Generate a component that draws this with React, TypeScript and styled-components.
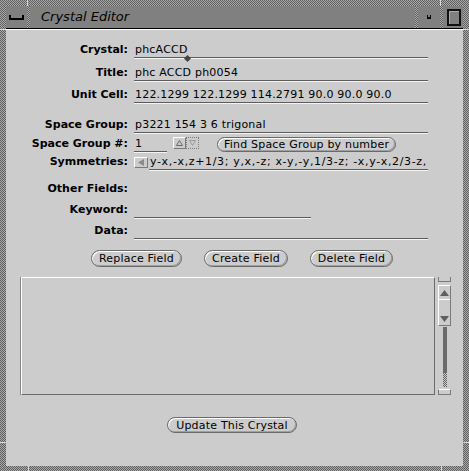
import React from "react";
import styled, { createGlobalStyle } from "styled-components";

const GlobalStyle = createGlobalStyle`
  html, body {
    margin: 0;
    padding: 0;
    background: #cccccc;
  }
  body {
    font-family: "DejaVu Sans", sans-serif;
  }
`;

const dither = `repeating-conic-gradient(#a9a9a9 0% 25%, #5f5f5f 0% 50%) 0 0 / 2px 2px`;

const Window = styled.div`
  position: relative;
  width: 469px;
  height: 471px;
  box-sizing: border-box;
  padding: 6px 6px 5px 6px;
  background: ${dither};
  display: flex;
  flex-direction: column;
`;

const Tick = styled.span<{ $v?: boolean }>`
  position: absolute;
  background: #d8d8d8;
  width: ${(p) => (p.$v ? "1px" : "6px")};
  height: ${(p) => (p.$v ? "6px" : "1px")};
`;

const TitleBar = styled.div`
  height: 22px;
  display: flex;
  background: #808080;
  border-bottom: 1px solid #000;
`;

const TitleSep = styled.div`
  width: 3px;
  background: ${dither};
`;

const TitleBox = styled.div<{ $w: number }>`
  width: ${(p) => p.$w}px;
  display: flex;
  align-items: center;
  justify-content: center;
`;

const TitleText = styled.div`
  flex: 1;
  padding-left: 11px;
  font: oblique 13px/22px "DejaVu Sans", sans-serif;
  color: #000;
`;

const ZoomBox = styled.div`
  width: 10px;
  height: 13px;
  border: 2px solid #111;
  box-shadow: inset 1px 1px 0 #a8a8a8;
  margin-left: 1px;
`;

const Panel = styled.div`
  flex: 1;
  background: #cccccc;
  border-top: 1px solid #fff;
  padding-top: 12px;
  display: flex;
  flex-direction: column;
`;

const Row = styled.div<{ $mt?: number }>`
  display: grid;
  grid-template-columns: 122px 294px;
  column-gap: 6px;
  margin-top: ${(p) => p.$mt ?? 0}px;
  height: 16px;
  align-items: start;
`;

const Label = styled.div`
  font: bold 11px/15px "DejaVu Sans", sans-serif;
  text-align: right;
  color: #000;
  white-space: nowrap;
`;

const Field = styled.div<{ $w?: number; $ls?: number; $open?: boolean }>`
  position: relative;
  width: ${(p) => (p.$w ? `${p.$w}px` : "auto")};
  flex: ${(p) => (p.$w ? "none" : "1")};
  height: 15px;
  padding-left: 1px;
  font: 11px/15px "DejaVu Sans", sans-serif;
  letter-spacing: ${(p) => p.$ls ?? 0.2}px;
  color: #000;
  white-space: nowrap;
  overflow: ${(p) => (p.$open ? "visible" : "hidden")};
  border-bottom: 1px solid #5c5c5c;
  box-shadow: 0 1px 0 #f4f4f4;
`;

const Caret = styled.span`
  position: relative;
  display: inline-block;
  width: 0;
  height: 0;

  svg {
    position: absolute;
    left: -4px;
    top: 2px;
  }
`;

const Inline = styled.div<{ $gap?: number }>`
  display: flex;
  align-items: flex-start;
  gap: ${(p) => p.$gap ?? 0}px;
`;

const SpinBox = styled.div<{ $dim?: boolean }>`
  width: 11px;
  height: 10px;
  margin-top: 1px;
  display: flex;
  align-items: center;
  justify-content: center;
  border: 1px ${(p) => (p.$dim ? "dotted #7a7a7a" : "solid")};
  border-color: ${(p) => (p.$dim ? "#7a7a7a" : "#fff #7a7a7a #7a7a7a #fff")};
`;

const ScrollArrowBox = styled.div`
  width: 12px;
  height: 9px;
  margin-top: 3px;
  display: flex;
  align-items: center;
  justify-content: center;
  border: 1px solid;
  border-color: #fff #7a7a7a #7a7a7a #fff;
`;

const Button = styled.button<{ $h?: number; $px?: number }>`
  height: ${(p) => p.$h ?? 17}px;
  padding: 0 ${(p) => p.$px ?? 7}px;
  margin: 0;
  border: 1px solid #6a6a6a;
  border-radius: 9px;
  background: #cccccc;
  box-shadow: inset 1px 1px 0 #fff, inset -1px -1px 0 #a0a0a0;
  font: 11px/1 "DejaVu Sans", sans-serif;
  letter-spacing: 0.2px;
  color: #000;
  white-space: nowrap;
`;

const ButtonRow = styled.div<{ $mt: number; $center?: boolean }>`
  display: flex;
  margin-top: ${(p) => p.$mt}px;
  padding-left: ${(p) => (p.$center ? 0 : 85)}px;
  padding-right: ${(p) => (p.$center ? 5 : 0)}px;
  justify-content: ${(p) => (p.$center ? "center" : "flex-start")};
  gap: 22px;
`;

const ListRow = styled.div`
  display: flex;
  margin-top: 10px;
  padding-left: 15px;
  gap: 3px;
  height: 118px;
`;

const ListBox = styled.div`
  width: 412px;
  height: 116px;
  border: 1px solid;
  border-color: #fff #6a6a6a #6a6a6a #fff;
  box-shadow: -1px 0 0 #8a8a8a;
`;

const Scrollbar = styled.div`
  width: 13px;
  display: flex;
  flex-direction: column;
  align-items: center;
`;

const Cap = styled.div<{ $bottom?: boolean }>`
  width: 11px;
  height: 4px;
  border: 1px solid #7a7a7a;
  ${(p) => (p.$bottom ? "border-top-color: #fff;" : "border-top: none;")}
  margin-top: ${(p) => (p.$bottom ? 2 : 0)}px;
`;

const Elevator = styled.div`
  width: 11px;
  height: 39px;
  margin-top: 3px;
  border: 1px solid;
  border-color: #fff #7a7a7a #7a7a7a #fff;
  display: flex;
  flex-direction: column;
`;

const ElevUp = styled.div`
  height: 13px;
  border-bottom: 1px solid #fff;
  display: flex;
  align-items: center;
  justify-content: center;
`;

const ElevDown = styled.div`
  flex: 1;
  display: flex;
  align-items: flex-end;
  justify-content: center;
  padding-bottom: 3px;
`;

const Cable = styled.div`
  width: 4px;
  flex: 1;
  margin-top: 1px;
  background: #6a6a6a;
`;

const CableDither = styled.div`
  width: 4px;
  height: 14px;
  background: repeating-conic-gradient(#cfcfcf 0% 25%, #5f5f5f 0% 50%) 0 0 / 2px 2px;
`;

const upTri = (
  <svg width="9" height="6" viewBox="0 0 9 6">
    <path d="M4.5 0 L9 6 H0 Z" fill="#5f5f5f" />
  </svg>
);

const downTri = (
  <svg width="9" height="6" viewBox="0 0 9 6">
    <path d="M0 0 H9 L4.5 6 Z" fill="#5f5f5f" />
  </svg>
);

export default function App() {
  return (
    <>
      <GlobalStyle />
      <Window>
        <Tick $v style={{ left: 27, top: 0 }} />
        <Tick $v style={{ left: 440, top: 0 }} />
        <Tick $v style={{ left: 28, bottom: 0 }} />
        <Tick $v style={{ left: 441, bottom: 0 }} />
        <Tick style={{ left: 0, top: 29 }} />
        <Tick style={{ right: 0, top: 29 }} />
        <Tick style={{ left: 0, bottom: 28 }} />
        <Tick style={{ right: 0, bottom: 28 }} />
        <TitleBar>
          <TitleBox $w={21}>
            <svg width="15" height="5" viewBox="0 0 15 5">
              <path d="M1 0 V4 H14 V0" stroke="#000" strokeWidth="2" fill="none" />
            </svg>
          </TitleBox>
          <TitleSep />
          <TitleText>Crystal Editor</TitleText>
          <TitleSep />
          <TitleBox $w={22}>
            <svg width="4" height="4" viewBox="0 0 4 4">
              <path d="M0 0 H1 V2 H3 V0 H4 V4 H0 Z" fill="#000" />
            </svg>
          </TitleBox>
          <TitleSep />
          <TitleBox $w={20}>
            <ZoomBox />
          </TitleBox>
        </TitleBar>
        <Panel>
          <Row>
            <Label>Crystal:</Label>
            <Field $open>
              phcACCD
              <Caret>
                <svg width="7" height="7" viewBox="0 0 7 7">
                  <path d="M3.5 0 L7 3.5 L3.5 7 L0 3.5 Z" fill="#444" />
                </svg>
              </Caret>
            </Field>
          </Row>
          <Row $mt={7}>
            <Label>Title:</Label>
            <Field>phc ACCD ph0054</Field>
          </Row>
          <Row $mt={6}>
            <Label>Unit Cell:</Label>
            <Field>122.1299 122.1299 114.2791 90.0 90.0 90.0</Field>
          </Row>
          <Row $mt={14}>
            <Label>Space Group:</Label>
            <Field>p3221 154 3 6 trigonal</Field>
          </Row>
          <Row $mt={3}>
            <Label>Space Group #:</Label>
            <Inline>
              <Field $w={32}>1</Field>
              <Inline style={{ marginLeft: 6 }}>
                <SpinBox>
                  <svg width="7" height="6" viewBox="0 0 7 6">
                    <path d="M3.5 0.5 L6.5 5.5 H0.5 Z" stroke="#6a6a6a" fill="none" />
                  </svg>
                </SpinBox>
                <SpinBox $dim>
                  <svg width="7" height="6" viewBox="0 0 7 6">
                    <path d="M0.5 0.5 H6.5 L3.5 5.5 Z" stroke="#9a9a9a" fill="none" />
                  </svg>
                </SpinBox>
              </Inline>
              <Button $h={15} $px={6} style={{ marginLeft: 18, marginTop: 1 }}>
                Find Space Group by number
              </Button>
            </Inline>
          </Row>
          <Row $mt={2}>
            <Label>Symmetries:</Label>
            <Inline $gap={1}>
              <ScrollArrowBox>
                <svg width="6" height="7" viewBox="0 0 6 7">
                  <path d="M0 3.5 L6 0 V7 Z" fill="#8a8a8a" />
                </svg>
              </ScrollArrowBox>
              <Field $ls={0.65}>y-x,-x,z+1/3; y,x,-z; x-y,-y,1/3-z; -x,y-x,2/3-z,</Field>
            </Inline>
          </Row>
          <Row $mt={11}>
            <Label>Other Fields:</Label>
          </Row>
          <Row $mt={5}>
            <Label>Keyword:</Label>
            <Field $w={176} />
          </Row>
          <Row $mt={5}>
            <Label>Data:</Label>
            <Field />
          </Row>
          <ButtonRow $mt={11}>
            <Button>Replace Field</Button>
            <Button>Create Field</Button>
            <Button>Delete Field</Button>
          </ButtonRow>
          <ListRow>
            <ListBox />
            <Scrollbar>
              <Cap />
              <Elevator>
                <ElevUp>{upTri}</ElevUp>
                <ElevDown>{downTri}</ElevDown>
              </Elevator>
              <Cable />
              <CableDither />
              <Cap $bottom />
            </Scrollbar>
          </ListRow>
          <ButtonRow $mt={22} $center>
            <Button $h={16} $px={8}>
              Update This Crystal
            </Button>
          </ButtonRow>
        </Panel>
      </Window>
    </>
  );
}
